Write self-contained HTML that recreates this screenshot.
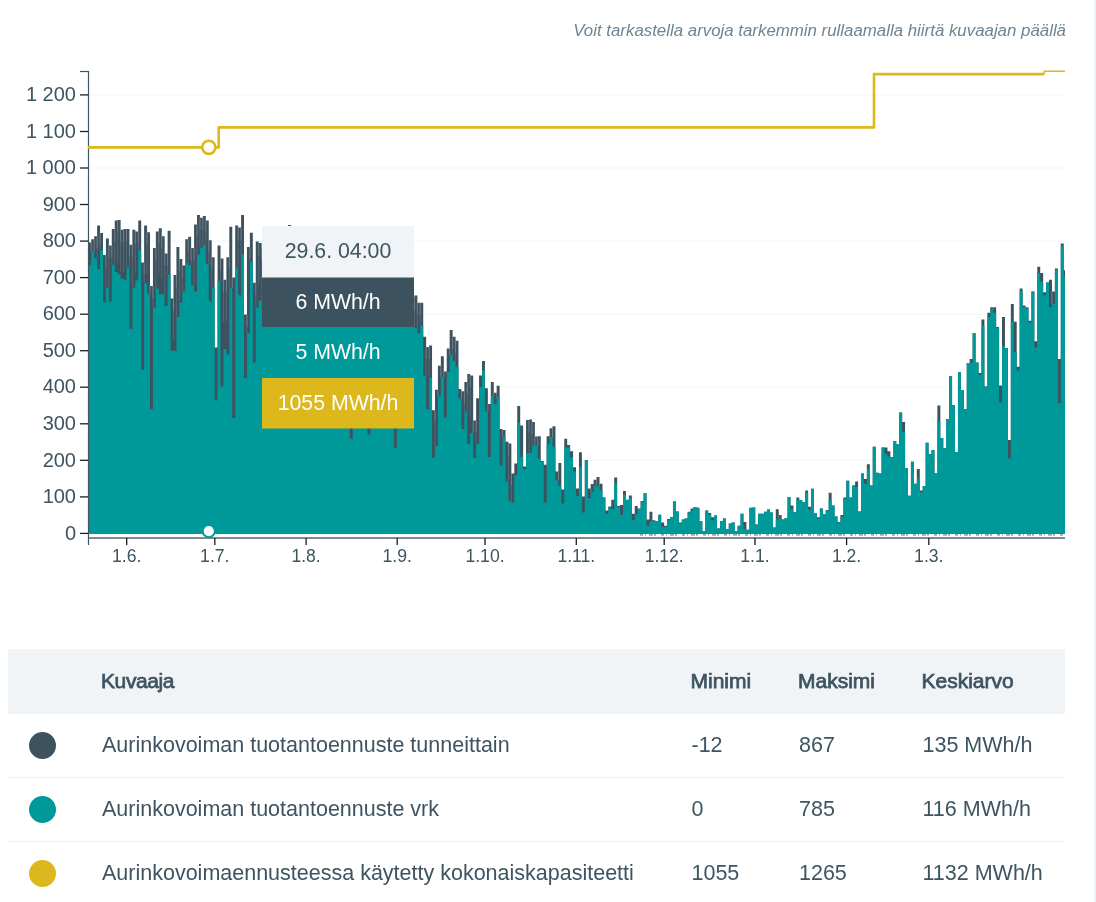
<!DOCTYPE html>
<html><head><meta charset="utf-8">
<style>
html,body{margin:0;padding:0;background:#fff;width:1096px;height:902px;overflow:hidden;}
body{font-family:"Liberation Sans",sans-serif;color:#3d5461;position:relative;will-change:transform;}
.sub{position:absolute;right:30px;top:21px;font-size:16.85px;font-style:italic;color:#6d8593;white-space:nowrap;}
svg text{font-family:"Liberation Sans",sans-serif;}
.strip{position:absolute;left:1094px;top:0;width:2px;height:902px;background:#eef2f5;}
.thead{position:absolute;left:8px;top:649px;width:1057px;height:65px;background:#f1f4f7;}
.t{position:absolute;white-space:nowrap;font-size:21.5px;line-height:24px;}
.b{font-weight:normal;font-size:21px;-webkit-text-stroke:0.75px #3d5461;letter-spacing:0px;}
.sep{position:absolute;left:8px;width:1057px;height:1px;background:#eef2f5;}
.dot{position:absolute;left:29px;width:27px;height:27px;border-radius:50%;}
</style></head><body>
<div class="sub">Voit tarkastella arvoja tarkemmin rullaamalla hiirtä kuvaajan päällä</div>
<svg width="1096" height="600" style="position:absolute;left:0;top:0;will-change:transform">
<line x1="89" x2="1065" y1="460.3" y2="460.3" stroke="#f4f6f8" stroke-width="1.1"/>
<line x1="89" x2="1065" y1="387.2" y2="387.2" stroke="#f4f6f8" stroke-width="1.1"/>
<line x1="89" x2="1065" y1="314.2" y2="314.2" stroke="#f4f6f8" stroke-width="1.1"/>
<line x1="89" x2="1065" y1="241.1" y2="241.1" stroke="#f4f6f8" stroke-width="1.1"/>
<line x1="89" x2="1065" y1="168.0" y2="168.0" stroke="#f4f6f8" stroke-width="1.1"/>
<line x1="89" x2="1065" y1="94.9" y2="94.9" stroke="#f4f6f8" stroke-width="1.1"/>
<path d="M88.30 534V242.5h2.94V534zM91.24 534V239.3h2.94V534zM94.18 534V236.3h2.94V534zM97.11 534V225.4h2.94V534zM100.05 534V233.0h2.94V534zM102.99 534V255.0h2.94V534zM105.93 534V238.5h2.94V534zM108.87 534V245.5h2.94V534zM111.80 534V229.0h2.94V534zM114.74 534V220.6h2.94V534zM117.68 534V219.9h2.94V534zM120.62 534V229.8h2.94V534zM123.56 534V229.0h2.94V534zM126.49 534V229.0h2.94V534zM129.43 534V244.7h2.94V534zM132.37 534V229.8h2.94V534zM135.31 534V231.6h2.94V534zM138.25 534V220.6h2.94V534zM141.18 534V262.6h2.94V534zM144.12 534V225.4h2.94V534zM147.06 534V232.3h2.94V534zM150.00 534V286.0h2.94V534zM152.94 534V248.0h2.94V534zM155.87 534V231.6h2.94V534zM158.81 534V228.3h2.94V534zM161.75 534V236.3h2.94V534zM164.69 534V253.5h2.94V534zM167.63 534V230.8h2.94V534zM170.56 534V298.4h2.94V534zM173.50 534V275.1h2.94V534zM176.44 534V246.9h2.94V534zM179.38 534V259.0h2.94V534zM182.32 534V265.6h2.94V534zM185.25 534V239.3h2.94V534zM188.19 534V236.7h2.94V534zM191.13 534V248.0h2.94V534zM194.07 534V224.6h2.94V534zM197.01 534V215.1h2.94V534zM199.94 534V217.7h2.94V534zM202.88 534V215.9h2.94V534zM205.82 534V220.6h2.94V534zM208.76 534V240.3h2.94V534zM211.70 534V257.2h2.94V534zM214.63 534V347.4h2.94V534zM217.57 534V245.5h2.94V534zM220.51 534V258.6h2.94V534zM223.45 534V279.8h2.94V534zM226.39 534V257.2h2.94V534zM229.32 534V226.8h2.94V534zM232.26 534V277.6h2.94V534zM235.20 534V225.4h2.94V534zM238.14 534V227.6h2.94V534zM241.08 534V215.1h2.94V534zM244.01 534V314.5h2.94V534zM246.95 534V246.9h2.94V534zM249.89 534V232.7h2.94V534zM252.83 534V282.7h2.94V534zM255.77 534V241.4h2.94V534zM258.70 534V242.9h2.94V534zM261.64 534V248.0h2.94V534zM264.58 534V239.3h2.94V534zM267.52 534V243.6h2.94V534zM270.46 534V258.6h2.94V534zM273.39 534V260.1h2.94V534zM276.33 534V260.1h2.94V534zM279.27 534V250.6h2.94V534zM282.21 534V260.4h2.94V534zM285.15 534V246.6h2.94V534zM288.08 534V225.0h2.94V534zM291.02 534V238.2h2.94V534zM293.96 534V242.5h2.94V534zM296.90 534V264.5h2.94V534zM299.84 534V260.4h2.94V534zM302.77 534V265.2h2.94V534zM305.71 534V252.8h2.94V534zM308.65 534V256.4h2.94V534zM311.59 534V271.8h2.94V534zM314.53 534V254.2h2.94V534zM317.46 534V265.9h2.94V534zM320.40 534V263.0h2.94V534zM323.34 534V253.9h2.94V534zM326.28 534V271.0h2.94V534zM329.22 534V263.7h2.94V534zM332.15 534V258.6h2.94V534zM335.09 534V252.0h2.94V534zM338.03 534V269.6h2.94V534zM340.97 534V278.4h2.94V534zM343.91 534V282.4h2.94V534zM346.84 534V262.3h2.94V534zM349.78 534V259.7h2.94V534zM352.72 534V265.9h2.94V534zM355.66 534V270.3h2.94V534zM358.60 534V263.7h2.94V534zM361.53 534V275.4h2.94V534zM364.47 534V288.2h2.94V534zM367.41 534V272.1h2.94V534zM370.35 534V268.1h2.94V534zM373.29 534V281.6h2.94V534zM376.22 534V293.3h2.94V534zM379.16 534V290.0h2.94V534zM382.10 534V294.1h2.94V534zM385.04 534V293.0h2.94V534zM387.98 534V286.0h2.94V534zM390.91 534V296.3h2.94V534zM393.85 534V283.5h2.94V534zM396.79 534V276.5h2.94V534zM399.73 534V293.3h2.94V534zM402.67 534V291.9h2.94V534zM405.60 534V275.1h2.94V534zM408.54 534V298.8h2.94V534zM411.48 534V298.1h2.94V534zM414.42 534V295.5h2.94V534zM417.36 534V302.8h2.94V534zM420.29 534V302.8h2.94V534zM423.23 534V336.8h2.94V534zM426.17 534V347.0h2.94V534zM429.11 534V345.6h2.94V534zM432.05 534V410.3h2.94V534zM434.98 534V389.8h2.94V534zM437.92 534V365.7h2.94V534zM440.86 534V356.2h2.94V534zM443.80 534V371.5h2.94V534zM446.74 534V348.5h2.94V534zM449.67 534V329.9h2.94V534zM452.61 534V336.8h2.94V534zM455.55 534V340.8h2.94V534zM458.49 534V389.1h2.94V534zM461.43 534V391.3h2.94V534zM464.36 534V382.1h2.94V534zM467.30 534V374.1h2.94V534zM470.24 534V375.5h2.94V534zM473.18 534V420.5h2.94V534zM476.12 534V398.2h2.94V534zM479.05 534V375.5h2.94V534zM481.99 534V360.9h2.94V534zM484.93 534V388.3h2.94V534zM487.87 534V404.0h2.94V534zM490.81 534V382.1h2.94V534zM493.74 534V392.7h2.94V534zM496.68 534V385.8h2.94V534zM499.62 534V428.9h2.94V534zM502.56 534V430.0h2.94V534zM505.50 534V441.7h2.94V534zM508.43 534V443.5h2.94V534zM511.37 534V473.5h2.94V534zM514.31 534V463.6h2.94V534zM517.25 534V405.9h2.94V534zM520.19 534V425.6h2.94V534zM523.12 534V466.5h2.94V534zM526.06 534V420.1h2.94V534zM529.00 534V419.4h2.94V534zM531.94 534V422.0h2.94V534zM534.88 534V436.6h2.94V534zM537.81 534V436.2h2.94V534zM540.75 534V461.1h2.94V534zM543.69 534V464.7h2.94V534zM546.63 534V436.2h2.94V534zM549.57 534V428.2h2.94V534zM552.50 534V426.3h2.94V534zM555.44 534V471.6h2.94V534zM558.38 534V462.9h2.94V534zM561.32 534V489.6h2.94V534zM564.26 534V438.8h2.94V534zM567.19 534V445.0h2.94V534zM570.13 534V451.2h2.94V534zM573.07 534V467.3h2.94V534zM576.01 534V488.5h2.94V534zM578.95 534V452.3h2.94V534zM581.88 534V496.5h2.94V534zM584.82 534V460.0h2.94V534zM587.76 534V488.5h2.94V534zM590.70 534V484.1h2.94V534zM593.64 534V479.7h2.94V534zM596.57 534V477.1h2.94V534zM599.51 534V483.7h2.94V534zM602.45 534V497.6h2.94V534zM605.39 534V510.4h2.94V534zM608.33 534V506.4h2.94V534zM611.26 534V499.8h2.94V534zM614.20 534V477.5h2.94V534zM617.14 534V506.0h2.94V534zM620.08 534V504.9h2.94V534zM623.02 534V491.0h2.94V534zM625.95 534V499.8h2.94V534zM628.89 534V495.4h2.94V534zM631.83 534V513.7h2.94V534zM634.77 534V506.0h2.94V534zM637.71 534V508.6h2.94V534zM640.64 534V500.9h2.94V534zM643.58 534V493.2h2.94V534zM646.52 534V519.5h2.94V534zM649.46 534V511.8h2.94V534zM652.40 534V520.2h2.94V534zM655.33 534V521.3h2.94V534zM658.27 534V514.8h2.94V534zM661.21 534V522.4h2.94V534zM664.15 534V525.7h2.94V534zM667.09 534V519.1h2.94V534zM670.02 534V517.0h2.94V534zM672.96 534V501.2h2.94V534zM675.90 534V511.5h2.94V534zM678.84 534V522.4h2.94V534zM681.78 534V519.5h2.94V534zM684.71 534V518.4h2.94V534zM687.65 534V511.8h2.94V534zM690.59 534V508.6h2.94V534zM693.53 534V507.1h2.94V534zM696.47 534V507.8h2.94V534zM699.40 534V521.3h2.94V534zM702.34 534V531.2h2.94V534zM705.28 534V510.4h2.94V534zM708.22 534V512.9h2.94V534zM711.16 534V517.3h2.94V534zM714.09 534V515.5h2.94V534zM717.03 534V528.6h2.94V534zM719.97 534V521.0h2.94V534zM722.91 534V518.4h2.94V534zM725.85 534V529.0h2.94V534zM728.78 534V523.5h2.94V534zM731.72 534V522.4h2.94V534zM734.66 534V531.2h2.94V534zM737.60 534V525.7h2.94V534zM740.54 534V513.7h2.94V534zM743.47 534V522.1h2.94V534zM746.41 534V529.7h2.94V534zM749.35 534V507.8h2.94V534zM752.29 534V507.5h2.94V534zM755.23 534V524.6h2.94V534zM758.16 534V513.7h2.94V534zM761.10 534V513.7h2.94V534zM764.04 534V511.8h2.94V534zM766.98 534V509.6h2.94V534zM769.92 534V512.6h2.94V534zM772.85 534V527.6h2.94V534zM775.79 534V509.3h2.94V534zM778.73 534V515.1h2.94V534zM781.67 534V519.5h2.94V534zM784.61 534V518.1h2.94V534zM787.54 534V497.2h2.94V534zM790.48 534V505.6h2.94V534zM793.42 534V512.2h2.94V534zM796.36 534V497.6h2.94V534zM799.30 534V500.1h2.94V534zM802.23 534V502.0h2.94V534zM805.17 534V490.6h2.94V534zM808.11 534V506.7h2.94V534zM811.05 534V488.8h2.94V534zM813.99 534V512.9h2.94V534zM816.92 534V517.3h2.94V534zM819.86 534V508.6h2.94V534zM822.80 534V514.0h2.94V534zM825.74 534V510.0h2.94V534zM828.68 534V492.8h2.94V534zM831.61 534V505.6h2.94V534zM834.55 534V516.6h2.94V534zM837.49 534V522.1h2.94V534zM840.43 534V515.1h2.94V534zM843.37 534V497.6h2.94V534zM846.30 534V480.8h2.94V534zM849.24 534V497.6h2.94V534zM852.18 534V485.5h2.94V534zM855.12 534V481.5h2.94V534zM858.06 534V511.5h2.94V534zM860.99 534V473.5h2.94V534zM863.93 534V479.0h2.94V534zM866.87 534V464.3h2.94V534zM869.81 534V485.5h2.94V534zM872.75 534V446.8h2.94V534zM875.68 534V472.7h2.94V534zM878.62 534V473.5h2.94V534zM881.56 534V447.5h2.94V534zM884.50 534V447.5h2.94V534zM887.44 534V451.2h2.94V534zM890.37 534V457.0h2.94V534zM893.31 534V441.0h2.94V534zM896.25 534V443.9h2.94V534zM899.19 534V412.5h2.94V534zM902.13 534V422.0h2.94V534zM905.06 534V468.0h2.94V534zM908.00 534V495.8h2.94V534zM910.94 534V461.8h2.94V534zM913.88 534V483.7h2.94V534zM916.82 534V469.1h2.94V534zM919.75 534V490.6h2.94V534zM922.69 534V485.9h2.94V534zM925.63 534V442.8h2.94V534zM928.57 534V454.1h2.94V534zM931.51 534V450.1h2.94V534zM934.44 534V473.1h2.94V534zM937.38 534V405.5h2.94V534zM940.32 534V438.0h2.94V534zM943.26 534V448.3h2.94V534zM946.20 534V419.0h2.94V534zM949.13 534V376.3h2.94V534zM952.07 534V405.1h2.94V534zM955.01 534V451.9h2.94V534zM957.95 534V372.3h2.94V534zM960.89 534V390.2h2.94V534zM963.82 534V409.2h2.94V534zM966.76 534V363.1h2.94V534zM969.70 534V359.1h2.94V534zM972.64 534V333.2h2.94V534zM975.58 534V362.4h2.94V534zM978.51 534V373.0h2.94V534zM981.45 534V319.6h2.94V534zM984.39 534V386.5h2.94V534zM987.33 534V312.7h2.94V534zM990.27 534V307.2h2.94V534zM993.20 534V307.2h2.94V534zM996.14 534V326.9h2.94V534zM999.08 534V385.4h2.94V534zM1002.02 534V317.1h2.94V534zM1004.96 534V348.1h2.94V534zM1007.89 534V439.9h2.94V534zM1010.83 534V303.9h2.94V534zM1013.77 534V321.8h2.94V534zM1016.71 534V366.8h2.94V534zM1019.65 534V288.6h2.94V534zM1022.58 534V305.4h2.94V534zM1025.52 534V307.2h2.94V534zM1028.46 534V320.7h2.94V534zM1031.40 534V291.5h2.94V534zM1034.34 534V341.2h2.94V534zM1037.27 534V266.7h2.94V534zM1040.21 534V272.9h2.94V534zM1043.15 534V292.2h2.94V534zM1046.09 534V282.4h2.94V534zM1049.03 534V279.8h2.94V534zM1051.96 534V291.5h2.94V534zM1054.90 534V268.5h2.94V534zM1057.84 534V359.1h2.94V534zM1060.78 534V243.6h2.94V534zM1063.72 534V270.3h1.28V534z" fill="#3d525f"/>
<path d="M88.30 534V265.6h2.94V534zM91.24 534V251.7h2.94V534zM94.18 534V257.9h2.94V534zM97.11 534V268.9h2.94V534zM100.05 534V250.2h2.94V534zM102.99 534V302.5h2.94V534zM105.93 534V287.5h2.94V534zM108.87 534V301.4h2.94V534zM111.80 534V264.8h2.94V534zM114.74 534V272.1h2.94V534zM117.68 534V274.3h2.94V534zM120.62 534V278.4h2.94V534zM123.56 534V279.8h2.94V534zM126.49 534V267.4h2.94V534zM129.43 534V328.8h2.94V534zM132.37 534V287.5h2.94V534zM135.31 534V280.5h2.94V534zM138.25 534V250.2h2.94V534zM141.18 534V369.7h2.94V534zM144.12 534V283.5h2.94V534zM147.06 534V293.7h2.94V534zM150.00 534V409.2h2.94V534zM152.94 534V307.6h2.94V534zM155.87 534V288.6h2.94V534zM158.81 534V294.4h2.94V534zM161.75 534V294.4h2.94V534zM164.69 534V306.1h2.94V534zM167.63 534V274.7h2.94V534zM170.56 534V350.7h2.94V534zM173.50 534V350.7h2.94V534zM176.44 534V317.1h2.94V534zM179.38 534V302.5h2.94V534zM182.32 534V291.5h2.94V534zM185.25 534V263.0h2.94V534zM188.19 534V265.2h2.94V534zM191.13 534V285.3h2.94V534zM194.07 534V291.5h2.94V534zM197.01 534V254.6h2.94V534zM199.94 534V247.7h2.94V534zM202.88 534V245.5h2.94V534zM205.82 534V264.1h2.94V534zM208.76 534V301.4h2.94V534zM211.70 534V287.5h2.94V534zM214.63 534V400.4h2.94V534zM217.57 534V281.3h2.94V534zM220.51 534V386.5h2.94V534zM223.45 534V348.9h2.94V534zM226.39 534V354.4h2.94V534zM229.32 534V287.5h2.94V534zM232.26 534V417.9h2.94V534zM235.20 534V267.4h2.94V534zM238.14 534V295.2h2.94V534zM241.08 534V254.2h2.94V534zM244.01 534V378.1h2.94V534zM246.95 534V333.2h2.94V534zM249.89 534V261.9h2.94V534zM252.83 534V362.4h2.94V534zM255.77 534V307.6h2.94V534zM258.70 534V300.6h2.94V534zM261.64 534V268.1h2.94V534zM264.58 534V256.8h2.94V534zM267.52 534V271.8h2.94V534zM270.46 534V291.9h2.94V534zM273.39 534V290.8h2.94V534zM276.33 534V278.0h2.94V534zM279.27 534V295.5h2.94V534zM282.21 534V283.1h2.94V534zM285.15 534V295.9h2.94V534zM288.08 534V278.0h2.94V534zM291.02 534V254.6h2.94V534zM293.96 534V267.8h2.94V534zM296.90 534V283.5h2.94V534zM299.84 534V305.0h2.94V534zM302.77 534V301.0h2.94V534zM305.71 534V280.9h2.94V534zM308.65 534V273.2h2.94V534zM311.59 534V293.7h2.94V534zM314.53 534V284.6h2.94V534zM317.46 534V302.1h2.94V534zM320.40 534V288.6h2.94V534zM323.34 534V294.1h2.94V534zM326.28 534V306.5h2.94V534zM329.22 534V310.1h2.94V534zM332.15 534V283.8h2.94V534zM335.09 534V271.0h2.94V534zM338.03 534V312.0h2.94V534zM340.97 534V310.9h2.94V534zM343.91 534V321.5h2.94V534zM346.84 534V297.7h2.94V534zM349.78 534V438.8h2.94V534zM352.72 534V302.5h2.94V534zM355.66 534V301.7h2.94V534zM358.60 534V312.7h2.94V534zM361.53 534V314.2h2.94V534zM364.47 534V328.8h2.94V534zM367.41 534V434.4h2.94V534zM370.35 534V293.0h2.94V534zM373.29 534V320.7h2.94V534zM376.22 534V324.8h2.94V534zM379.16 534V308.7h2.94V534zM382.10 534V336.8h2.94V534zM385.04 534V316.4h2.94V534zM387.98 534V332.4h2.94V534zM390.91 534V327.3h2.94V534zM393.85 534V447.9h2.94V534zM396.79 534V322.6h2.94V534zM399.73 534V322.9h2.94V534zM402.67 534V338.6h2.94V534zM405.60 534V295.2h2.94V534zM408.54 534V322.2h2.94V534zM411.48 534V330.6h2.94V534zM414.42 534V328.0h2.94V534zM417.36 534V333.2h2.94V534zM420.29 534V325.9h2.94V534zM423.23 534V375.9h2.94V534zM426.17 534V409.2h2.94V534zM429.11 534V378.1h2.94V534zM432.05 534V457.8h2.94V534zM434.98 534V446.1h2.94V534zM437.92 534V396.0h2.94V534zM440.86 534V377.4h2.94V534zM443.80 534V417.6h2.94V534zM446.74 534V371.9h2.94V534zM449.67 534V355.5h2.94V534zM452.61 534V360.9h2.94V534zM455.55 534V366.4h2.94V534zM458.49 534V398.9h2.94V534zM461.43 534V428.9h2.94V534zM464.36 534V411.4h2.94V534zM467.30 534V444.2h2.94V534zM470.24 534V432.9h2.94V534zM473.18 534V458.1h2.94V534zM476.12 534V443.9h2.94V534zM479.05 534V386.9h2.94V534zM481.99 534V370.4h2.94V534zM484.93 534V411.4h2.94V534zM487.87 534V457.0h2.94V534zM490.81 534V396.0h2.94V534zM493.74 534V404.0h2.94V534zM496.68 534V397.5h2.94V534zM499.62 534V465.4h2.94V534zM502.56 534V436.9h2.94V534zM505.50 534V481.5h2.94V534zM508.43 534V500.9h2.94V534zM511.37 534V502.7h2.94V534zM514.31 534V475.3h2.94V534zM517.25 534V422.7h2.94V534zM520.19 534V456.7h2.94V534zM523.12 534V469.1h2.94V534zM526.06 534V453.0h2.94V534zM529.00 534V453.0h2.94V534zM531.94 534V445.7h2.94V534zM534.88 534V446.1h2.94V534zM537.81 534V458.5h2.94V534zM540.75 534V461.8h2.94V534zM543.69 534V502.7h2.94V534zM546.63 534V444.2h2.94V534zM549.57 534V436.9h2.94V534zM552.50 534V446.8h2.94V534zM555.44 534V480.4h2.94V534zM558.38 534V485.9h2.94V534zM561.32 534V503.4h2.94V534zM564.26 534V447.5h2.94V534zM567.19 534V447.5h2.94V534zM570.13 534V457.4h2.94V534zM573.07 534V471.6h2.94V534zM576.01 534V495.8h2.94V534zM578.95 534V467.3h2.94V534zM581.88 534V512.6h2.94V534zM584.82 534V460.3h2.94V534zM587.76 534V498.3h2.94V534zM590.70 534V492.1h2.94V534zM593.64 534V485.2h2.94V534zM596.57 534V486.6h2.94V534zM599.51 534V490.3h2.94V534zM602.45 534V497.6h2.94V534zM605.39 534V514.0h2.94V534zM608.33 534V507.8h2.94V534zM611.26 534V509.3h2.94V534zM614.20 534V483.0h2.94V534zM617.14 534V507.1h2.94V534zM620.08 534V514.8h2.94V534zM623.02 534V494.7h2.94V534zM625.95 534V500.1h2.94V534zM628.89 534V498.3h2.94V534zM631.83 534V520.2h2.94V534zM634.77 534V513.7h2.94V534zM637.71 534V508.9h2.94V534zM640.64 534V501.6h2.94V534zM643.58 534V493.2h2.94V534zM646.52 534V525.7h2.94V534zM649.46 534V521.3h2.94V534zM652.40 534V521.3h2.94V534zM655.33 534V521.3h2.94V534zM658.27 534V514.8h2.94V534zM661.21 534V526.8h2.94V534zM664.15 534V526.8h2.94V534zM667.09 534V520.2h2.94V534zM670.02 534V517.0h2.94V534zM672.96 534V502.0h2.94V534zM675.90 534V511.5h2.94V534zM678.84 534V523.5h2.94V534zM681.78 534V519.5h2.94V534zM684.71 534V518.4h2.94V534zM687.65 534V512.6h2.94V534zM690.59 534V510.4h2.94V534zM693.53 534V507.1h2.94V534zM696.47 534V507.8h2.94V534zM699.40 534V521.3h2.94V534zM702.34 534V531.2h2.94V534zM705.28 534V510.4h2.94V534zM708.22 534V514.0h2.94V534zM711.16 534V520.2h2.94V534zM714.09 534V515.5h2.94V534zM717.03 534V528.6h2.94V534zM719.97 534V521.0h2.94V534zM722.91 534V518.4h2.94V534zM725.85 534V529.0h2.94V534zM728.78 534V523.5h2.94V534zM731.72 534V522.4h2.94V534zM734.66 534V531.2h2.94V534zM737.60 534V525.7h2.94V534zM740.54 534V513.7h2.94V534zM743.47 534V529.0h2.94V534zM746.41 534V529.7h2.94V534zM749.35 534V507.8h2.94V534zM752.29 534V507.5h2.94V534zM755.23 534V524.6h2.94V534zM758.16 534V513.7h2.94V534zM761.10 534V513.7h2.94V534zM764.04 534V511.8h2.94V534zM766.98 534V509.6h2.94V534zM769.92 534V512.6h2.94V534zM772.85 534V527.6h2.94V534zM775.79 534V519.5h2.94V534zM778.73 534V518.4h2.94V534zM781.67 534V519.5h2.94V534zM784.61 534V518.1h2.94V534zM787.54 534V497.2h2.94V534zM790.48 534V508.9h2.94V534zM793.42 534V512.2h2.94V534zM796.36 534V500.1h2.94V534zM799.30 534V500.1h2.94V534zM802.23 534V502.0h2.94V534zM805.17 534V492.8h2.94V534zM808.11 534V509.6h2.94V534zM811.05 534V488.8h2.94V534zM813.99 534V512.9h2.94V534zM816.92 534V518.8h2.94V534zM819.86 534V508.6h2.94V534zM822.80 534V514.0h2.94V534zM825.74 534V510.7h2.94V534zM828.68 534V500.1h2.94V534zM831.61 534V505.6h2.94V534zM834.55 534V516.6h2.94V534zM837.49 534V522.8h2.94V534zM840.43 534V517.0h2.94V534zM843.37 534V499.1h2.94V534zM846.30 534V480.8h2.94V534zM849.24 534V497.6h2.94V534zM852.18 534V485.5h2.94V534zM855.12 534V487.0h2.94V534zM858.06 534V511.5h2.94V534zM860.99 534V473.5h2.94V534zM863.93 534V483.7h2.94V534zM866.87 534V468.7h2.94V534zM869.81 534V485.5h2.94V534zM872.75 534V446.8h2.94V534zM875.68 534V472.7h2.94V534zM878.62 534V473.5h2.94V534zM881.56 534V447.5h2.94V534zM884.50 534V453.7h2.94V534zM887.44 534V456.3h2.94V534zM890.37 534V457.0h2.94V534zM893.31 534V441.0h2.94V534zM896.25 534V443.9h2.94V534zM899.19 534V412.5h2.94V534zM902.13 534V431.8h2.94V534zM905.06 534V468.0h2.94V534zM908.00 534V495.8h2.94V534zM910.94 534V461.8h2.94V534zM913.88 534V483.7h2.94V534zM916.82 534V478.6h2.94V534zM919.75 534V492.5h2.94V534zM922.69 534V485.9h2.94V534zM925.63 534V442.8h2.94V534zM928.57 534V454.1h2.94V534zM931.51 534V450.1h2.94V534zM934.44 534V473.1h2.94V534zM937.38 534V422.0h2.94V534zM940.32 534V438.0h2.94V534zM943.26 534V448.3h2.94V534zM946.20 534V419.0h2.94V534zM949.13 534V376.3h2.94V534zM952.07 534V405.1h2.94V534zM955.01 534V451.9h2.94V534zM957.95 534V372.3h2.94V534zM960.89 534V390.2h2.94V534zM963.82 534V409.2h2.94V534zM966.76 534V363.1h2.94V534zM969.70 534V363.1h2.94V534zM972.64 534V333.2h2.94V534zM975.58 534V362.4h2.94V534zM978.51 534V374.8h2.94V534zM981.45 534V325.9h2.94V534zM984.39 534V386.5h2.94V534zM987.33 534V317.1h2.94V534zM990.27 534V310.1h2.94V534zM993.20 534V312.7h2.94V534zM996.14 534V327.7h2.94V534zM999.08 534V402.6h2.94V534zM1002.02 534V346.3h2.94V534zM1004.96 534V348.1h2.94V534zM1007.89 534V458.5h2.94V534zM1010.83 534V321.8h2.94V534zM1013.77 534V351.8h2.94V534zM1016.71 534V370.4h2.94V534zM1019.65 534V291.5h2.94V534zM1022.58 534V307.2h2.94V534zM1025.52 534V308.3h2.94V534zM1028.46 534V322.6h2.94V534zM1031.40 534V291.5h2.94V534zM1034.34 534V347.4h2.94V534zM1037.27 534V272.9h2.94V534zM1040.21 534V281.6h2.94V534zM1043.15 534V295.2h2.94V534zM1046.09 534V282.4h2.94V534zM1049.03 534V307.2h2.94V534zM1051.96 534V303.9h2.94V534zM1054.90 534V270.3h2.94V534zM1057.84 534V403.3h2.94V534zM1060.78 534V246.2h2.94V534zM1063.72 534V276.5h1.28V534z" fill="#00999a"/>
<path d="M91.24 242.5v9.1M94.18 239.3v12.0M97.11 236.3v12.0M100.05 233.0v12.0M105.93 255.0v12.0M108.87 245.5v12.0M111.80 245.5v12.0M114.74 229.0v12.0M117.68 220.6v12.0M120.62 229.8v12.0M123.56 229.8v12.0M126.49 229.0v12.0M129.43 244.7v12.0M132.37 244.7v12.0M135.31 231.6v12.0M138.25 231.6v12.0M144.12 262.6v12.0M147.06 232.3v12.0M150.00 286.0v7.7M152.94 286.0v12.0M155.87 248.0v12.0M158.81 231.6v12.0M161.75 236.3v12.0M164.69 253.5v12.0M167.63 253.5v12.0M173.50 298.4v12.0M176.44 275.1v12.0M179.38 259.0v12.0M182.32 265.6v12.0M188.19 239.3v12.0M191.13 248.0v12.0M194.07 248.0v12.0M197.01 224.6v12.0M199.94 217.7v12.0M202.88 217.7v12.0M205.82 220.6v12.0M208.76 240.3v12.0M211.70 257.2v12.0M220.51 258.6v12.0M223.45 279.8v12.0M226.39 279.8v12.0M229.32 257.2v12.0M232.26 277.6v9.9M238.14 227.6v12.0M241.08 227.6v12.0M246.95 314.5v12.0M249.89 246.9v12.0M255.77 282.7v12.0M258.70 242.9v12.0M261.64 248.0v12.0M264.58 248.0v8.8M267.52 243.6v12.0M270.46 258.6v12.0M273.39 260.1v12.0M276.33 260.1v12.0M279.27 260.1v12.0M282.21 260.4v12.0M285.15 260.4v12.0M288.08 246.6v12.0M291.02 238.2v12.0M293.96 242.5v12.0M296.90 264.5v3.3M299.84 264.5v12.0M302.77 265.2v12.0M305.71 265.2v12.0M308.65 256.4v12.0M314.53 271.8v12.0M317.46 265.9v12.0M320.40 265.9v12.0M323.34 263.0v12.0M326.28 271.0v12.0M329.22 271.0v12.0M332.15 263.7v12.0M335.09 258.6v12.0M340.97 278.4v12.0M343.91 282.4v12.0M346.84 282.4v12.0M349.78 262.3v12.0M352.72 265.9v12.0M355.66 270.3v12.0M358.60 270.3v12.0M361.53 275.4v12.0M364.47 288.2v12.0M367.41 288.2v12.0M370.35 272.1v12.0M373.29 281.6v11.3M376.22 293.3v12.0M379.16 293.3v12.0M382.10 294.1v12.0M385.04 294.1v12.0M387.98 293.0v12.0M390.91 296.3v12.0M393.85 296.3v12.0M396.79 283.5v12.0M399.73 293.3v12.0M402.67 293.3v12.0M405.60 291.9v3.3M411.48 298.8v12.0M414.42 298.1v12.0M417.36 302.8v12.0M420.29 302.8v12.0M426.17 347.0v12.0M429.11 347.0v12.0M434.98 410.3v12.0M437.92 389.8v6.2M440.86 365.7v11.7M443.80 371.5v5.8M449.67 348.5v6.9M452.61 336.8v12.0M455.55 340.8v12.0M461.43 391.3v7.7M464.36 391.3v12.0M467.30 382.1v12.0M470.24 375.5v12.0M473.18 420.5v12.0M476.12 420.5v12.0M487.87 404.0v7.3M493.74 392.7v3.3M496.68 392.7v4.8M502.56 430.0v6.9M508.43 443.5v12.0M511.37 473.5v12.0M529.00 420.1v12.0M531.94 422.0v12.0M534.88 436.6v9.1M537.81 436.6v9.5M552.50 428.2v8.8M558.38 471.6v8.8M590.70 488.5v3.7M596.57 479.7v5.5M599.51 483.7v2.9M778.73 515.1v3.3M993.20 307.2v2.9M1051.96 291.5v12.0" stroke="#fff" stroke-opacity="0.4" stroke-width="0.7" fill="none"/>
<path d="M94.18 251.3v0.4M97.11 248.3v9.6M100.05 245.0v5.2M105.93 267.0v20.5M108.87 257.5v30.0M111.80 257.5v7.4M114.74 241.0v23.8M117.68 232.6v30.0M120.62 241.8v30.0M123.56 241.8v30.0M126.49 241.0v26.4M129.43 256.7v10.7M132.37 256.7v30.0M135.31 243.6v30.0M138.25 243.6v6.6M144.12 274.6v8.8M147.06 244.3v30.0M152.94 298.0v9.6M155.87 260.0v28.6M158.81 243.6v30.0M161.75 248.3v30.0M164.69 265.5v28.9M167.63 265.5v9.2M173.50 310.4v30.0M176.44 287.1v30.0M179.38 271.0v30.0M182.32 277.6v13.9M188.19 251.3v11.8M191.13 260.0v5.2M194.07 260.0v25.3M197.01 236.6v18.0M199.94 229.7v18.0M202.88 229.7v15.8M205.82 232.6v12.8M208.76 252.3v11.8M211.70 269.2v18.3M220.51 270.6v10.7M223.45 291.8v30.0M226.39 291.8v30.0M229.32 269.2v18.3M238.14 239.6v27.8M241.08 239.6v14.7M246.95 326.5v6.6M249.89 258.9v3.0M255.77 294.7v12.8M258.70 254.9v30.0M261.64 260.0v8.1M267.52 255.6v1.2M270.46 270.6v1.2M273.39 272.1v18.7M276.33 272.1v5.9M279.27 272.1v5.9M282.21 272.4v10.7M285.15 272.4v10.7M288.08 258.6v19.4M291.02 250.2v4.4M293.96 254.5v0.1M299.84 276.5v7.0M302.77 277.2v23.8M305.71 277.2v3.7M308.65 268.4v4.8M314.53 283.8v0.8M317.46 277.9v6.6M320.40 277.9v10.7M323.34 275.0v13.6M326.28 283.0v11.0M329.22 283.0v23.4M332.15 275.7v8.1M335.09 270.6v0.4M340.97 290.4v20.5M343.91 294.4v16.5M346.84 294.4v3.3M349.78 274.3v23.4M352.72 277.9v24.5M355.66 282.3v19.4M358.60 282.3v19.4M361.53 287.4v25.3M364.47 300.2v13.9M367.41 300.2v28.6M370.35 284.1v8.8M376.22 305.3v15.4M379.16 305.3v3.3M382.10 306.1v2.6M385.04 306.1v10.3M387.98 305.0v11.4M390.91 308.3v19.1M393.85 308.3v19.1M396.79 295.5v27.1M399.73 305.3v17.2M402.67 305.3v17.6M411.48 310.8v11.4M414.42 310.1v18.0M417.36 314.8v13.2M420.29 314.8v11.0M426.17 359.0v16.9M429.11 359.0v19.1M434.98 422.3v23.8M452.61 348.8v6.6M455.55 352.8v8.1M464.36 403.3v8.1M467.30 394.1v17.2M470.24 387.5v30.0M473.18 432.5v0.4M476.12 432.5v11.4M508.43 455.5v26.0M511.37 485.5v15.4M529.00 432.1v20.9M531.94 434.0v11.8M1051.96 303.5v0.4" stroke="#fff" stroke-opacity="0.18" stroke-width="0.7" fill="none"/>
<line x1="88.5" x2="88.5" y1="71" y2="545" stroke="#3d5461" stroke-width="1.2"/>
<line x1="80" x2="89" y1="71.5" y2="71.5" stroke="#3d5461" stroke-width="1.2"/>
<line x1="80" x2="88" y1="533.4" y2="533.4" stroke="#1d1d1d" stroke-width="1.3"/>
<line x1="80" x2="88" y1="496.9" y2="496.9" stroke="#1d1d1d" stroke-width="1.3"/>
<line x1="80" x2="88" y1="460.3" y2="460.3" stroke="#1d1d1d" stroke-width="1.3"/>
<line x1="80" x2="88" y1="423.8" y2="423.8" stroke="#1d1d1d" stroke-width="1.3"/>
<line x1="80" x2="88" y1="387.2" y2="387.2" stroke="#1d1d1d" stroke-width="1.3"/>
<line x1="80" x2="88" y1="350.7" y2="350.7" stroke="#1d1d1d" stroke-width="1.3"/>
<line x1="80" x2="88" y1="314.2" y2="314.2" stroke="#1d1d1d" stroke-width="1.3"/>
<line x1="80" x2="88" y1="277.6" y2="277.6" stroke="#1d1d1d" stroke-width="1.3"/>
<line x1="80" x2="88" y1="241.1" y2="241.1" stroke="#1d1d1d" stroke-width="1.3"/>
<line x1="80" x2="88" y1="204.5" y2="204.5" stroke="#1d1d1d" stroke-width="1.3"/>
<line x1="80" x2="88" y1="168.0" y2="168.0" stroke="#1d1d1d" stroke-width="1.3"/>
<line x1="80" x2="88" y1="131.5" y2="131.5" stroke="#1d1d1d" stroke-width="1.3"/>
<line x1="80" x2="88" y1="94.9" y2="94.9" stroke="#1d1d1d" stroke-width="1.3"/>
<line x1="88" x2="1065" y1="538" y2="538" stroke="#54646d" stroke-width="1.7"/>
<line x1="640" x2="1065" y1="534.9" y2="534.9" stroke="#3d525f" stroke-width="1.3" stroke-dasharray="3 2 1 3 4 1 2 5" opacity="0.7"/>
<line x1="126.7" x2="126.7" y1="538" y2="545" stroke="#1d1d1d" stroke-width="1.3"/>
<text x="126.7" y="562" text-anchor="middle" font-size="17.6" fill="#3d5461">1.6.</text>
<line x1="214.8" x2="214.8" y1="538" y2="545" stroke="#1d1d1d" stroke-width="1.3"/>
<text x="214.8" y="562" text-anchor="middle" font-size="17.6" fill="#3d5461">1.7.</text>
<line x1="306.1" x2="306.1" y1="538" y2="545" stroke="#1d1d1d" stroke-width="1.3"/>
<text x="306.1" y="562" text-anchor="middle" font-size="17.6" fill="#3d5461">1.8.</text>
<line x1="397.2" x2="397.2" y1="538" y2="545" stroke="#1d1d1d" stroke-width="1.3"/>
<text x="397.2" y="562" text-anchor="middle" font-size="17.6" fill="#3d5461">1.9.</text>
<line x1="485.0" x2="485.0" y1="538" y2="545" stroke="#1d1d1d" stroke-width="1.3"/>
<text x="485.0" y="562" text-anchor="middle" font-size="17.6" fill="#3d5461">1.10.</text>
<line x1="576.3" x2="576.3" y1="538" y2="545" stroke="#1d1d1d" stroke-width="1.3"/>
<text x="576.3" y="562" text-anchor="middle" font-size="17.6" fill="#3d5461">1.11.</text>
<line x1="664.2" x2="664.2" y1="538" y2="545" stroke="#1d1d1d" stroke-width="1.3"/>
<text x="664.2" y="562" text-anchor="middle" font-size="17.6" fill="#3d5461">1.12.</text>
<line x1="755.0" x2="755.0" y1="538" y2="545" stroke="#1d1d1d" stroke-width="1.3"/>
<text x="755.0" y="562" text-anchor="middle" font-size="17.6" fill="#3d5461">1.1.</text>
<line x1="846.6" x2="846.6" y1="538" y2="545" stroke="#1d1d1d" stroke-width="1.3"/>
<text x="846.6" y="562" text-anchor="middle" font-size="17.6" fill="#3d5461">1.2.</text>
<line x1="928.8" x2="928.8" y1="538" y2="545" stroke="#1d1d1d" stroke-width="1.3"/>
<text x="928.8" y="562" text-anchor="middle" font-size="17.6" fill="#3d5461">1.3.</text>
<text x="76" y="539.6" text-anchor="end" font-size="20" fill="#3d5461">0</text>
<text x="76" y="503.1" text-anchor="end" font-size="20" fill="#3d5461">100</text>
<text x="76" y="466.5" text-anchor="end" font-size="20" fill="#3d5461">200</text>
<text x="76" y="430.0" text-anchor="end" font-size="20" fill="#3d5461">300</text>
<text x="76" y="393.4" text-anchor="end" font-size="20" fill="#3d5461">400</text>
<text x="76" y="356.9" text-anchor="end" font-size="20" fill="#3d5461">500</text>
<text x="76" y="320.4" text-anchor="end" font-size="20" fill="#3d5461">600</text>
<text x="76" y="283.8" text-anchor="end" font-size="20" fill="#3d5461">700</text>
<text x="76" y="247.3" text-anchor="end" font-size="20" fill="#3d5461">800</text>
<text x="76" y="210.7" text-anchor="end" font-size="20" fill="#3d5461">900</text>
<text x="76" y="174.2" text-anchor="end" font-size="20" fill="#3d5461">1 000</text>
<text x="76" y="137.7" text-anchor="end" font-size="20" fill="#3d5461">1 100</text>
<text x="76" y="101.1" text-anchor="end" font-size="20" fill="#3d5461">1 200</text>
<path d="M88 147.4H218.7V127.4H874V74.1H1044.3" fill="none" stroke="#dcb81c" stroke-width="2.6" stroke-linejoin="round"/>
<path d="M1044.3 74.1V71.3H1065" fill="none" stroke="#dcb81c" stroke-width="1.6"/>
<circle cx="208.8" cy="147.3" r="6.6" fill="#fff" stroke="#dcb81c" stroke-width="2.6"/>
<circle cx="208.8" cy="531.1" r="6.1" fill="#fff" stroke="#00999a" stroke-width="2"/>
<rect x="262" y="226" width="152" height="52.5" fill="#f1f4f7"/>
<rect x="262" y="277.5" width="152" height="50.5" fill="#3d525f"/>
<rect x="262" y="327" width="152" height="52.0" fill="#00999a"/>
<rect x="262" y="378" width="152" height="50.5" fill="#dcb81c"/>
<text x="338.0" y="258.2" text-anchor="middle" font-size="21.3" fill="#3d5461">29.6. 04:00</text>
<text x="338.0" y="308.8" text-anchor="middle" font-size="21.3" fill="#fff">6 MWh/h</text>
<text x="338.0" y="359.0" text-anchor="middle" font-size="21.3" fill="#fff">5 MWh/h</text>
<text x="338.0" y="409.8" text-anchor="middle" font-size="21.3" fill="#fff">1055 MWh/h</text>
</svg>
<div class="strip"></div>
<div class="thead"></div>
<div class="t b" style="left:101px;top:669px;letter-spacing:-0.4px">Kuvaaja</div>
<div class="t b" style="left:690.5px;top:669px">Minimi</div>
<div class="t b" style="left:798px;top:669px">Maksimi</div>
<div class="t b" style="left:921.5px;top:669px">Keskiarvo</div>
<div class="dot" style="top:732px;background:#3d525f"></div>
<div class="dot" style="top:796px;background:#00999a"></div>
<div class="dot" style="top:860px;background:#dcb81c"></div>
<div class="sep" style="top:777px"></div>
<div class="sep" style="top:841px"></div>
<div class="t" style="left:102px;top:733px">Aurinkovoiman tuotantoennuste tunneittain</div>
<div class="t" style="left:691.5px;top:733px">-12</div>
<div class="t" style="left:799px;top:733px">867</div>
<div class="t" style="left:922.5px;top:733px">135 MWh/h</div>
<div class="t" style="left:102px;top:797px">Aurinkovoiman tuotantoennuste vrk</div>
<div class="t" style="left:691.5px;top:797px">0</div>
<div class="t" style="left:799px;top:797px">785</div>
<div class="t" style="left:922.5px;top:797px">116 MWh/h</div>
<div class="t" style="left:102px;top:861px">Aurinkovoimaennusteessa käytetty kokonaiskapasiteetti</div>
<div class="t" style="left:691.5px;top:861px">1055</div>
<div class="t" style="left:799px;top:861px">1265</div>
<div class="t" style="left:922.5px;top:861px">1132 MWh/h</div>
</body></html>
